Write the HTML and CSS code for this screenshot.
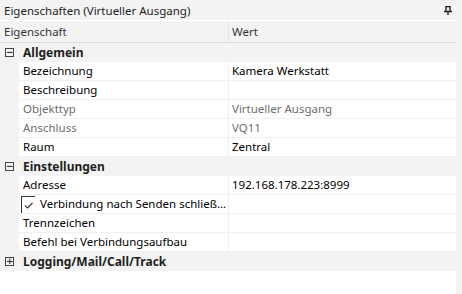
FILE: index.html
```html
<!DOCTYPE html>
<html lang="de">
<head>
    <meta charset="UTF-8">
    <title>Eigenschaften</title>
    <link rel="stylesheet" href="styles.css">
</head>
<body>

    <div class="panel">
        <div class="titleBar">
            <span>Eigenschaften (Virtueller Ausgang)</span>
            <svg class="pin" width="8" height="9" viewBox="0 0 8 9">
                <path d="M2 0.5h4v5h-4z M0 5.5h8 M4 5.5v3.5" fill="none" stroke="#1e1e1e" stroke-width="1.4"/>
            </svg>
        </div>

        <div class="grid">
            <div class="header">
                <div class="hName">Eigenschaft</div>
                <div class="hValue">Wert</div>
            </div>

            <div class="category">
                <span class="expander">&minus;</span>
                <span class="catName">Allgemein</span>
            </div>
            <div class="row">
                <div class="name">Bezeichnung</div>
                <div class="value">Kamera Werkstatt</div>
            </div>
            <div class="row">
                <div class="name">Beschreibung</div>
                <div class="value"></div>
            </div>
            <div class="row disabled">
                <div class="name">Objekttyp</div>
                <div class="value">Virtueller Ausgang</div>
            </div>
            <div class="row disabled">
                <div class="name">Anschluss</div>
                <div class="value">VQ11</div>
            </div>
            <div class="row">
                <div class="name">Raum</div>
                <div class="value">Zentral</div>
            </div>

            <div class="category">
                <span class="expander">&minus;</span>
                <span class="catName">Einstellungen</span>
            </div>
            <div class="row">
                <div class="name">Adresse</div>
                <div class="value">192.168.178.223:8999</div>
            </div>
            <div class="row">
                <div class="name checkName">
                    <span class="check">
                        <svg width="10" height="7" viewBox="0 0 10 7">
                            <path d="M1 3.5l2.5 2.5l5 -5" fill="none" stroke="#333" stroke-width="1.1"/>
                        </svg>
                    </span>
                    <span>Verbindung nach Senden schließ...</span>
                </div>
                <div class="value"></div>
            </div>
            <div class="row">
                <div class="name">Trennzeichen</div>
                <div class="value"></div>
            </div>
            <div class="row">
                <div class="name">Befehl bei Verbindungsaufbau</div>
                <div class="value"></div>
            </div>

            <div class="category">
                <span class="expander">+</span>
                <span class="catName">Logging/Mail/Call/Track</span>
            </div>

            <div class="bottom"></div>
        </div>
    </div>

</body>
</html>
```

FILE: styles.css
```css
body{
    margin: 0;
    font-family: "Noto Sans", "Liberation Sans", sans-serif;
    font-size: 11.5px;
    color: #000;
    background-color: #f3f3f3;
}

.panel{
    width: 462px;
    height: 294px;
    overflow: hidden;
    background-color: #f3f3f3;
}

.titleBar{
    height: 20px;
    line-height: 19px;
    padding-left: 4px;
    color: #1e1e1e;
    display: flex;
    justify-content: space-between;
    align-items: center;
    border-bottom: 1px solid #fff;
    width: 452px;
}

.pin{
    margin-right: 4px;
    margin-top: 1px;
}

.grid{
    width: 456px;
}

.header{
    display: grid;
    grid-template-columns: 229px 1fr;
    height: 21px;
    line-height: 21px;
    border-bottom: 1px solid #dcdcdc;
    color: #333;
}

.hName{
    padding-left: 4px;
    border-right: 1px solid #e6e6e6;
}

.hValue{
    padding-left: 3px;
}

.category{
    height: 19px;
    line-height: 18px;
    display: flex;
    align-items: center;
}

.expander{
    width: 7px;
    height: 7px;
    margin-left: 5px;
    border: 1px solid #444;
    font-size: 9px;
    line-height: 7px;
    text-align: center;
    color: #333;
    font-family: "DejaVu Sans", sans-serif;
    font-weight: bold;
}

.catName{
    margin-left: 9px;
    font-weight: bold;
    font-size: 12px;
    color: #1e1e1e;
}

.row{
    display: grid;
    grid-template-columns: 210px 1fr;
    margin-left: 19px;
    height: 18px;
    line-height: 18px;
    background-color: #fff;
    border-bottom: 1px solid #f0f0f0;
}

.name{
    padding-left: 4px;
    border-right: 1px solid #f0f0f0;
    white-space: nowrap;
    overflow: hidden;
}

.value{
    padding-left: 3px;
}

.disabled{
    color: #6d6d6d;
}

.checkName{
    display: flex;
    align-items: flex-start;
    padding-left: 2px;
}

.check{
    width: 14px;
    height: 18px;
    margin-top: 1px;
    margin-right: 5px;
    border-left: 1px solid #333;
    border-top: 1px solid #333;
    padding: 5px 0 0 2px;
    box-sizing: border-box;
}

.check svg{
    display: block;
}

.bottom{
    height: 24px;
    background-color: #fff;
}
```
